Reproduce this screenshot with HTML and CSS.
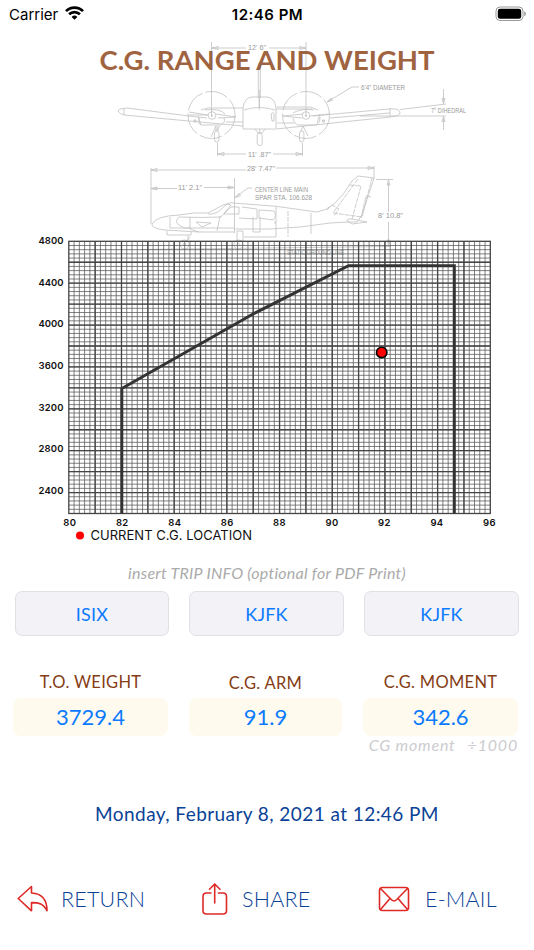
FILE: index.html
```html
<!DOCTYPE html>
<html lang="en">
  <head>
    <meta charset="utf-8">
    <title>C.G. Range and Weight</title>
    <meta name="viewport" content="width=device-width, initial-scale=1.0">
    <link rel="stylesheet" href="styles.css">
  </head>
  <body>
    <header class="status-bar">
      <div class="carrier">
        <span>Carrier</span>
        <svg width="19" height="14" viewBox="0 0 19 14" fill="none" stroke="#000" stroke-width="2.7">
          <path d="M1 5.1a12 12 0 0 1 17 0"/>
          <path d="M4.1 8.3a7.7 7.7 0 0 1 10.8 0"/>
          <path d="M9.5 13.8 6.6 10.9a4.1 4.1 0 0 1 5.8 0z" fill="#000" stroke="none"/>
        </svg>
      </div>
      <div class="time">12:46 PM</div>
      <div class="battery">
        <svg width="31" height="16" viewBox="0 0 31 16">
          <rect x="1" y="1" width="27" height="13.5" rx="4" fill="none" stroke="#999"/>
          <rect x="2.8" y="2.8" width="23.4" height="9.9" rx="2.3"/>
          <path d="M29.3 5.2v5q1.5-.7 1.5-2.5t-1.5-2.5z" fill="#888"/>
        </svg>
      </div>
    </header>

    <section class="stage">
      <h1>C.G. RANGE AND WEIGHT</h1>
      <svg class="chart" width="534" height="520" viewBox="0 30 534 520">
        <!-- front view -->
        <g class="plane">
          <path d="M211.5 42V117M306 42V117M212 48H246M269 48H306M212 48l6-1.5v3zM306 48l-6-1.5v3z"/>
          <path d="M258.3 98V64q1-3 2 0V98M259.3 90v18"/>
          <path d="M243 129V108q1-10 9-11h15q8 1 9 11v20q-1 2-4 1zM244 110q15-5 31 0M259.3 97v13"/>
          <path d="M243 126 124 115q-9-3-4-6l7-1 62 8M189 116l18 2M124 109v6M276 129l114-12q11-1 10-5t-11-3l-76 7M330 118l60-5M390 108v8"/>
          <path d="M201 110l7-2h35M277 107h33l8 3M276 109h36M277 123h17M226 122h17"/>
          <circle cx="211.5" cy="115" r="23.5" stroke-dasharray="23 3"/>
          <circle cx="306" cy="115" r="23.5" stroke-dasharray="23 3"/>
          <circle cx="212" cy="115.5" r="3.8"/><circle cx="306" cy="115.5" r="3.8"/>
          <circle cx="212" cy="115.5" r=".6"/><circle cx="306" cy="115.5" r=".6"/>
          <path d="M189 112l19 3M189 115h19M216 114l20 3-18 1M199 118q-1 6 2 7h19q6-2 4-7M205 110q15-2 20 4M329 114l-19 2M303 114l-20 2 19 2M293 118q1 6 5 7h19q4-4 3-8M293 113q8-5 21-3M198 116l3 9M320 114l-3 9"/>
          <circle cx="195" cy="121" r="1.2" fill="#aaa"/><circle cx="323.5" cy="121" r="1.2" fill="#aaa"/>
          <rect x="214.5" y="131" width="4.4" height="11" rx="2.2"/>
          <rect x="257.2" y="133" width="5" height="12.5" rx="2.4"/>
          <rect x="299.5" y="131" width="4.4" height="11" rx="2.2"/>
          <path d="M211 137l5-11v5l4-5M218 126v5M255 129l3 4h4l3-4M259.7 129v4M303 126l-2 5M303 126l5 10"/>
          <path d="M271 114q3-3 3 1v6h-2z"/>
          <path d="M217.5 143v13M302.5 143v13M218 154h28M273 154h29M218 154l6-1.5v3zM302 154l-6-1.5v3z"/>
          <path d="M359 87h-7l-25 15M327 102l4-4 1.5 2.3zM400 109.5l46-5.5M360 116h86M443.5 89v14M443.5 117v13M443.5 103.5l-1.5-5h3zM443.5 116.5l-1.5 5h3z"/>
        </g>

        <!-- side view -->
        <g class="plane">
          <path d="M151 168V224M374 166v13M151 170h95M276 168h98M151 170l6-1.5v3zM374 168l-6-1.5v3z"/>
          <path d="M151 188.5h26M204 187.5h30M151 188.5l6-1.5v3zM234 187.5l-6-1.5v3zM234.5 178v55M252 188h-4l-13 9.5M235 197.5l4-4 1.5 2.3z"/>
          <path d="M234 232q-34 1-70-2-13-2-12-6 4-8 27-9 15-3 29-2l15-8q8-3 10-2 43 2 84 9 18-2 35-31l6-5 16 2-12 37-5 7h-9l-18 1q-30 5-60 6h-36"/>
          <path d="M208 214q3 1 10-2l9-8 4 1-10 12q-18 1-42 0-5 5 0 8l5 3h50"/>
          <path d="M224 214l7-7h8v7zM242 207l15 2v10l-18-1M259 210l15 1q3 5-1 9l-14-2zM170 217v11h20M190 217v12l9 3M196 222l15 1-9 4zM220 216l-3 15M253 217v15h7v-15M276 207v30M311 213v21M275 221v3"/>
          <path d="M288 211v26M358 179l-25 34 29 4 10-39M349 185l12 1-9 33M371 197l-5-1-5 22M327 210l5-5 7 4-5 7" stroke-dasharray="5 1"/>
          <path d="M347 221q-1-2 5-2l15 3-15 2z"/>
          <path d="M167 231v4h24v-3M188 235v5M186 242l4-5M237 231h6v10h-6zM244 237h32"/>
          <circle cx="184.5" cy="244.5" r="4.5"/><circle cx="184.5" cy="244.5" r="1.3"/>
          <circle cx="238.5" cy="244.5" r="4.5"/><circle cx="238.5" cy="244.5" r="1.3"/>
          <path d="M376 179.5h17M388.5 183v29M388.5 222v22M388.5 180l-1.5 5h3zM388.5 245l-1.5-5h3zM141 249.5l250-3"/>
        </g>

        <g class="plane-text">
          <text x="248" y="50" textLength="18" lengthAdjust="spacingAndGlyphs">12' 6"</text>
          <text x="248" y="156.5" textLength="23" lengthAdjust="spacingAndGlyphs">11' .87"</text>
          <text x="361" y="90" textLength="44" lengthAdjust="spacingAndGlyphs">6'4" DIAMETER</text>
          <text x="431" y="113" textLength="35" lengthAdjust="spacingAndGlyphs">7° DIHEDRAL</text>
          <text x="247" y="171" textLength="28" lengthAdjust="spacingAndGlyphs">28' 7.47"</text>
          <text x="178" y="190" textLength="24" lengthAdjust="spacingAndGlyphs">11' 2.1"</text>
          <text x="255" y="191.5" textLength="53" lengthAdjust="spacingAndGlyphs">CENTER LINE MAIN</text>
          <text x="255" y="199.5" textLength="57" lengthAdjust="spacingAndGlyphs">SPAR STA. 106.628</text>
          <text x="378" y="218" textLength="25" lengthAdjust="spacingAndGlyphs">8' 10.8"</text>
          <text x="287" y="254.5" textLength="57" lengthAdjust="spacingAndGlyphs">STATIC GROUND LINE</text>
        </g>

        <!-- weight / arm grid -->
        <path id="minor" class="minor"/>
        <path id="major" class="major"/>
        <rect x="68.8" y="241.3" width="421.5" height="272.2" class="frame"/>
        <path class="envelope" d="M121.8 513.5V388.5L253 314 348.500 265.700H454.300V513.500"/>
        <circle cx="381.7" cy="352.4" r="5.2" fill="#f00" stroke="#000" stroke-width="1.6"/>

        <g class="axis axis-y">
          <text x="63.5" y="243.7" textLength="25">4800</text>
          <text x="63.5" y="285.5" textLength="25">4400</text>
          <text x="63.5" y="327.2" textLength="25">4000</text>
          <text x="63.5" y="368.9" textLength="25">3600</text>
          <text x="63.5" y="410.7" textLength="25">3200</text>
          <text x="63.5" y="451.7" textLength="25">2800</text>
          <text x="63.5" y="493.5" textLength="25">2400</text>
        </g>
        <g class="axis axis-x">
          <text x="69.8" y="526">80</text>
          <text x="122.3" y="526">82</text>
          <text x="174.8" y="526">84</text>
          <text x="227.2" y="526">86</text>
          <text x="279.5" y="526">88</text>
          <text x="332" y="526">90</text>
          <text x="384.5" y="526">92</text>
          <text x="437" y="526">94</text>
          <text x="489.5" y="526">96</text>
        </g>
        <circle cx="80" cy="535.5" r="4" fill="#f00"/>
        <text class="legend" x="90.5" y="540.2" textLength="161.5">CURRENT C.G. LOCATION</text>
      </svg>
    </section>

    <p class="hint">insert TRIP INFO (optional for PDF Print)</p>

    <div class="fields">
      <div class="field">ISIX</div>
      <div class="field">KJFK</div>
      <div class="field">KJFK</div>
    </div>

    <div class="results">
      <div class="result">
        <h2 class="weight">T.O. WEIGHT</h2>
        <div class="value">3729.4</div>
      </div>
      <div class="result">
        <h2 class="arm">C.G. ARM</h2>
        <div class="value">91.9</div>
      </div>
      <div class="result">
        <h2 class="moment">C.G. MOMENT</h2>
        <div class="value">342.6</div>
      </div>
    </div>
    <p class="note"><span>CG moment</span><span>÷1000</span></p>

    <p class="date">Monday, February 8, 2021 at 12:46 PM</p>

    <nav class="actions">
      <a class="return">
        <svg width="32" height="28" viewBox="0 0 32 28">
          <path d="M1.2 13.5 14.5 1.5V8C25 8.5 30 15 30 25.8 26.5 18.5 22 17.5 14.5 17.6V25.8z"/>
        </svg>
        <span>RETURN</span>
      </a>
      <a class="share">
        <svg width="26" height="34" viewBox="0 0 26 34">
          <path d="M9 11H4.5Q1 11 1 14.5V28.500Q1 32 4.500 32H21Q24.500 32 24.500 28.500V14.500Q24.500 11 21 11H16.500M12.700 21V2M7.500 7.300 12.700 2 18 7.300"/>
        </svg>
        <span>SHARE</span>
      </a>
      <a class="email">
        <svg width="32" height="26" viewBox="0 0 32 26">
          <rect x="1.5" y="1.5" width="29" height="23" rx="3"/>
          <path d="M2.5 2.5 13.5 13.700Q16 16.200 18.500 13.700L29.500 2.500M2.500 23.500 12 12.500M29.500 23.500 20 12.500"/>
        </svg>
        <span>E-MAIL</span>
      </a>
    </nav>

    <script src="script.js"></script>
  </body>
</html>
```

FILE: script.js
```js
const left = 68.8, top_ = 241.3, width = 421.5, height = 272.2;

function gridPath(cols, rows) {
  let d = '';
  for (let i = 1; i < cols; i++) {
    d += `M${left + i * width / cols} ${top_}v${height}`;
  }
  for (let i = 1; i < rows; i++) {
    d += `M${left} ${top_ + i * height / rows}h${width}`;
  }
  return d;
}

// five light squares inside every heavy one
document.getElementById('minor').setAttribute('d', gridPath(80, 65));
document.getElementById('major').setAttribute('d', gridPath(16, 13));
```

FILE: styles.css
```css
body {
  font-family: Lato, sans-serif;
  background-color: #fff;
  margin: 0;
  width: 534px;
  height: 950px;
  display: flex;
  flex-direction: column;
  overflow: hidden;
  font-variant-ligatures: none;
}

h1, h2, p {
  margin: 0;
  font-weight: normal;
}

.status-bar {
  height: 30px;
  box-sizing: border-box;
  padding: 0 8px 2px 9px;
  display: grid;
  grid-template-columns: 1fr auto 1fr;
  align-items: center;
  font-family: Inter, sans-serif;
  font-size: 15px;
}

.carrier {
  display: flex;
  align-items: center;
  gap: 7px;
}

.carrier svg {
  margin-top: -2px;
}

.time {
  font-weight: 600;
  letter-spacing: 0.5px;
}

.battery {
  display: flex;
  justify-content: flex-end;
}

/* the title shares its cell with the drawing */
.stage {
  display: grid;
  height: 520px;
}

.stage h1 {
  grid-area: 1 / 1;
  justify-self: center;
  padding-top: 13px;
  color: #a0633f;
  font-size: 27.5px;
  line-height: 33px;
  font-weight: 700;
  white-space: nowrap;
}

.chart {
  grid-area: 1 / 1;
  display: block;
}

.plane {
  fill: none;
  stroke: #666;
  stroke-width: 0.8;
  opacity: 0.4;
}

.plane-text {
  font-family: "Liberation Sans", sans-serif;
  font-size: 7px;
  fill: #999;
}

.minor {
  fill: none;
  stroke: #555;
  stroke-width: 0.75;
}

.major {
  fill: none;
  stroke: #444;
  stroke-width: 1.3;
}

.frame {
  fill: none;
  stroke: #444;
  stroke-width: 1.3;
}

.envelope {
  fill: none;
  stroke: #333;
  stroke-width: 3;
}

.axis {
  font-family: Inter, sans-serif;
  font-size: 9.5px;
  font-weight: 600;
  fill: #111;
}

.axis-y {
  text-anchor: end;
}

.axis-x {
  text-anchor: middle;
  letter-spacing: 0.4px;
}

.legend {
  font-family: Inter, sans-serif;
  font-size: 13px;
  fill: #111;
}

.hint {
  margin-top: 12px;
  height: 22px;
  line-height: 22px;
  text-align: center;
  font-size: 16px;
  letter-spacing: 0.25px;
  font-style: italic;
  color: #aaa;
}

.fields {
  display: grid;
  grid-template-columns: 154px 155px 155px;
  column-gap: 20px;
  padding-left: 15px;
  margin-top: 7px;
}

.field {
  height: 45px;
  line-height: 45px;
  box-sizing: border-box;
  border: 1px solid #e0e0e5;
  border-radius: 7px;
  background-color: #f2f2f7;
  color: #0a7aff;
  font-size: 18px;
  letter-spacing: 0.2px;
  text-align: center;
}

.results {
  display: grid;
  grid-template-columns: 155px 153px 155px;
  column-gap: 21px;
  padding-left: 13px;
  margin-top: 34px;
}

.result h2 {
  height: 28px;
  line-height: 24px;
  font-size: 16.5px;
  letter-spacing: 0.3px;
  color: #853c14;
  text-align: center;
}

.result .arm {
  line-height: 26px;
}

.value {
  height: 38px;
  line-height: 37px;
  border-radius: 8px;
  background-color: #fffaee;
  color: #0a7aff;
  font-size: 22px;
  text-align: center;
}

.note {
  display: flex;
  justify-content: flex-end;
  gap: 12px;
  padding-right: 16px;
  height: 18px;
  line-height: 18px;
  font-size: 16px;
  letter-spacing: 0.8px;
  font-style: italic;
  color: #ccccd0;
}

.date {
  margin-top: 48px;
  line-height: 24px;
  text-align: center;
  font-size: 19px;
  letter-spacing: 0.43px;
  color: #0a4296;
}

.actions {
  display: grid;
  grid-template-columns: 185px 176px 1fr;
  padding-left: 17px;
  margin-top: 54px;
  height: 38px;
}

.actions a {
  display: flex;
  align-items: center;
  color: #0a4296;
  font-size: 21.5px;
  letter-spacing: 0.2px;
  gap: 12px;
}

.actions .share {
  gap: 14px;
}

.actions .email {
  gap: 15px;
}

.actions svg {
  fill: none;
  stroke: #de2a26;
  stroke-width: 1.6;
  stroke-linejoin: round;
  stroke-linecap: round;
}

.actions span {
  font-weight: 300;
}
```
